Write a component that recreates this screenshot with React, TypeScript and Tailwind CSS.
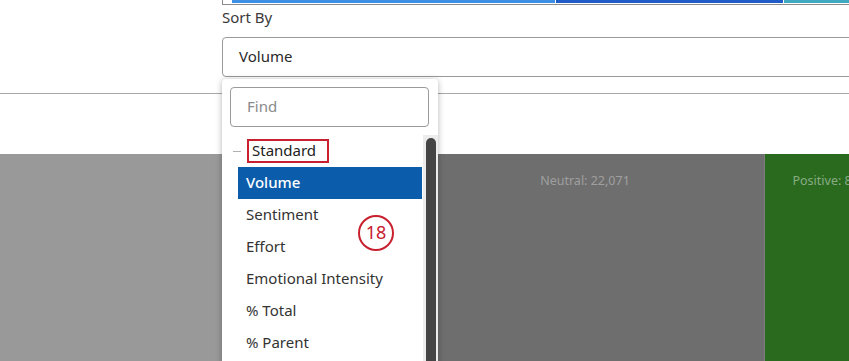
const font = { fontFamily: '"Noto Sans", "Open Sans", Arial, sans-serif' };

const sortOptions = ["Volume", "Sentiment", "Effort", "Emotional Intensity", "% Total", "% Parent"];

function TopBar() {
  return (
    <div className="flex h-[5px] border-b border-l border-[#8a8a8a] pl-[9px]">
      <div className="flex h-[3px] w-full gap-px">
        <div className="w-[323px] bg-[#3d8fe3]" />
        <div className="w-[227px] bg-[#1f5cc8]" />
        <div className="flex-1 bg-[#3ea9c0]" />
      </div>
    </div>
  );
}

function SortDropdown() {
  return (
    <div className="absolute left-[222px] top-[79px] w-[216px] rounded-[4px] bg-white shadow-[0_1px_6px_rgba(0,0,0,0.3)]">
      <div className="px-2 pt-2">
        <div className="flex h-[40px] w-[199px] items-center rounded-[4px] border border-[#9a9a9a] pb-px pl-[16px] text-[15px] text-[#8a8a8a]">
          Find
        </div>
      </div>
      <div className="mt-2 flex h-[240px]">
        <div className="flex-1 pr-px">
          <div className="flex h-[32px] items-center pl-[11px]">
            <span className="h-px w-[8px] bg-[#b0b0b0]" />
            <span className="ml-[6px] flex h-[24px] items-center border-2 border-[#c8202f] pb-px pl-[3px] pr-[11px] text-[15px] text-[#222]">
              Standard
            </span>
          </div>
          <ul className="ml-[16px]">
            {sortOptions.map((option, index) => (
              <li
                key={option}
                className={
                  index === 0
                    ? "flex h-[32px] items-center bg-[#0b5cab] pb-px pl-2 text-[15px] font-medium text-white"
                    : "flex h-[32px] items-center pb-px pl-2 text-[15px] text-[#333]"
                }
              >
                {option}
              </li>
            ))}
          </ul>
        </div>
        <div className="w-[15px] bg-[#ececec] pl-[3px] pt-[3px]">
          <div className="h-full w-[10px] rounded-t-full bg-[#444]" />
        </div>
      </div>
    </div>
  );
}

export default function App() {
  return (
    <div className="relative h-[361px] w-[849px] overflow-hidden bg-white" style={font}>
      <div className="pl-[222px]">
        <TopBar />
        <div className="mt-[2px] text-[15px] leading-[20px] text-[#3a3a3a]">Sort By</div>
        <div className="mt-[10px] flex h-[40px] w-[700px] items-center rounded-[4px] border border-[#9a9a9a] pb-[2px] pl-[16px] text-[15px] text-[#2a2a2a]">
          Volume
        </div>
      </div>
      <div className="mt-[16px] border-b border-[#a8a8a8]" />
      <div className="mt-[60px] flex h-[210px]">
        <div className="w-[406px] shrink-0 bg-[#999999]" />
        <div className="flex w-[358px] shrink-0 justify-center bg-[#6e6e6e] pt-[18px] text-[12.5px] text-white/35">
          Neutral: 22,071
        </div>
        <div className="flex w-[140px] shrink-0 justify-center border-l border-[#7d7d7d] bg-[#2a6a1f] pt-[18px] text-[12.5px] text-white/45">
          Positive: 8,318
        </div>
      </div>
      <SortDropdown />
      <div className="absolute left-[358px] top-[215px] flex h-[36px] w-[36px] items-center justify-center rounded-full border-2 border-[#c8202f] bg-white pb-px text-[18px] text-[#c8202f]">
        18
      </div>
    </div>
  );
}
